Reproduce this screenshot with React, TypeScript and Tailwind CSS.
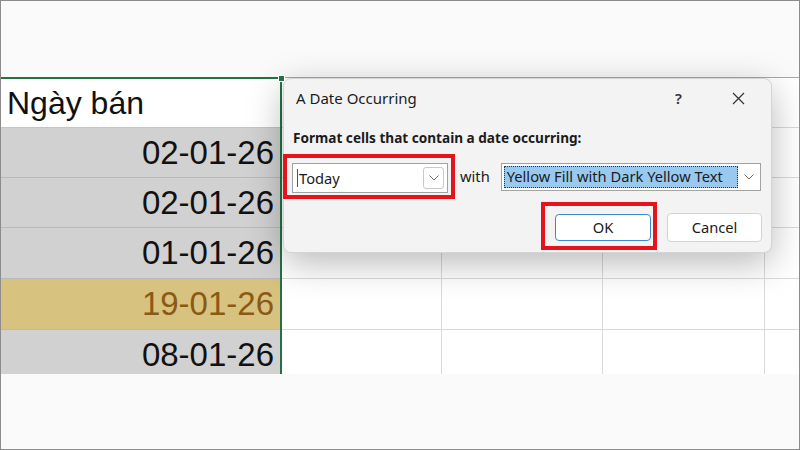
import React from 'react';

const dialogFont = { fontFamily: '"Noto Sans", "Open Sans", sans-serif' };

const Chevron = () => (
  <svg width="10" height="6" viewBox="0 0 10 6" fill="none" stroke="#6a6a6a" strokeWidth="1">
    <path d="M0.5 0.5 5 5 9.5 0.5" />
  </svg>
);

const DateCell = ({ value, yellow, h }: { value: string; yellow?: boolean; h: string }) => (
  <div
    className={`${h} shrink-0 flex items-center justify-end pr-[6px] border-b border-[#bababa] text-[33px] ${
      yellow ? 'bg-[#d8c27f] text-[#8a5a14]' : 'bg-[#d1d1d1] text-[#111]'
    }`}
  >
    {value}
  </div>
);

const GridRow = ({ h, top }: { h: string; top?: boolean }) => (
  <div className={`${h} shrink-0 flex border-b border-[#dadada] ${top ? 'border-t border-t-[#a8a8a8]' : ''}`}>
    <div className="w-[160px] border-r border-[#dadada] bg-white" />
    <div className="w-[161px] border-r border-[#dadada] bg-white" />
    <div className="w-[162px] border-r border-[#dadada] bg-white" />
    <div className="flex-1 bg-white" />
  </div>
);

export default function App() {
  const rows = [
    { v: '02-01-26', h: 'h-[50px]' },
    { v: '02-01-26', h: 'h-[50px]' },
    { v: '01-01-26', h: 'h-[51px]' },
    { v: '19-01-26', h: 'h-[51px]', yellow: true },
    { v: '08-01-26', h: 'h-[50px]' },
  ];

  return (
    <div className="relative w-[800px] h-[450px] overflow-hidden bg-[#fafafa] border border-[#8c8c8c]">
      <div className="h-[76px]" />

      {/* sheet */}
      <div className="h-[297px] flex overflow-hidden" style={{ fontFamily: '"Liberation Sans", Arial, sans-serif' }}>
        <div className="relative w-[281px] flex flex-col border-t-2 border-r-2 border-[#217346]">
          <div className="h-[49px] shrink-0 flex items-center pl-[6px] bg-white border-b border-[#c4c4c4] text-[32px] text-[#111]">
            Ngày bán
          </div>
          {rows.map((r, i) => (
            <DateCell key={i} value={r.v} yellow={r.yellow} h={r.h} />
          ))}
        </div>
        <div className="flex-1 flex flex-col">
          <GridRow h="h-[51px]" top />
          <GridRow h="h-[50px]" />
          <GridRow h="h-[50px]" />
          <GridRow h="h-[51px]" />
          <GridRow h="h-[51px]" />
          <GridRow h="h-[50px]" />
        </div>
      </div>

      {/* dialog */}
      <div
        className="absolute left-[282px] top-[77px] w-[489px] h-[175px] rounded-[8px] bg-[#f3f3f3] border border-[#d4d4d4] shadow-[0_10px_36px_rgba(0,0,0,0.28)] text-[#1b1b1b]"
        style={dialogFont}
      >
        <div className="h-[38px] flex items-center pl-[12px] pr-[26px]">
          <span className="text-[15px]">A Date Occurring</span>
          <span className="ml-auto text-[15px] font-semibold text-[#333]">?</span>
          <svg className="ml-[50px]" width="13" height="13" viewBox="0 0 13 13" stroke="#333" strokeWidth="1.2">
            <path d="M1 1 12 12M12 1 1 12" />
          </svg>
        </div>

        <div className="pl-[9px] mt-[12px] text-[13.6px] font-bold leading-[18px] whitespace-nowrap">
          Format cells that contain a date occurring:
        </div>

        <div className="flex items-center mt-[7px] -ml-[1px]">
          <div className="border-[4px] border-[#e5131b] pl-[5px] pr-[3px] pt-[5px] pb-[2px] w-[172px] h-[45px]">
            <div className="h-[30px] flex items-center bg-white border border-[#a2a2a2] pl-[4px] pr-[3px]">
              <span className="w-[1px] h-[18px] bg-[#555] mr-[1px]" />
              <span className="text-[14.7px]">Today</span>
              <div className="ml-auto w-[21px] h-[22px] flex items-center justify-center border border-[#c9c9c9] rounded-[3px] bg-white">
                <Chevron />
              </div>
            </div>
          </div>
          <span className="ml-[5px] text-[14.7px]">with</span>
          <div className="ml-[11px] w-[260px] h-[28px] flex items-center bg-white border border-[#a2a2a2] p-[2px]">
            <div className="h-full w-[234px] flex items-center bg-[#99c9ef] border border-dotted border-[#333] pl-[2px]">
              <span className="text-[14.7px] whitespace-nowrap">Yellow Fill with Dark Yellow Text</span>
            </div>
            <div className="ml-auto w-[18px] h-[20px] flex items-center justify-center bg-white">
              <Chevron />
            </div>
          </div>
        </div>

        <div className="flex items-start mt-[3px] pl-[257px]">
          <div className="border-[4px] border-[#e5131b] w-[116px] h-[48px] pl-[10px] pt-[8px]">
            <div className="w-[96px] h-[27px] flex items-center justify-center bg-white border border-[#3f86cf] rounded-[4px] text-[14.7px]">
              OK
            </div>
          </div>
          <div className="ml-[10px] mt-[11px] w-[95px] h-[29px] flex items-center justify-center bg-white border border-[#d3d3d3] rounded-[4px] text-[14.7px]">
            Cancel
          </div>
        </div>
      </div>

      {/* fill handle */}
      <div className="absolute left-[277px] top-[74px] w-[7px] h-[7px] bg-[#217346] border border-white" />
    </div>
  );
}
